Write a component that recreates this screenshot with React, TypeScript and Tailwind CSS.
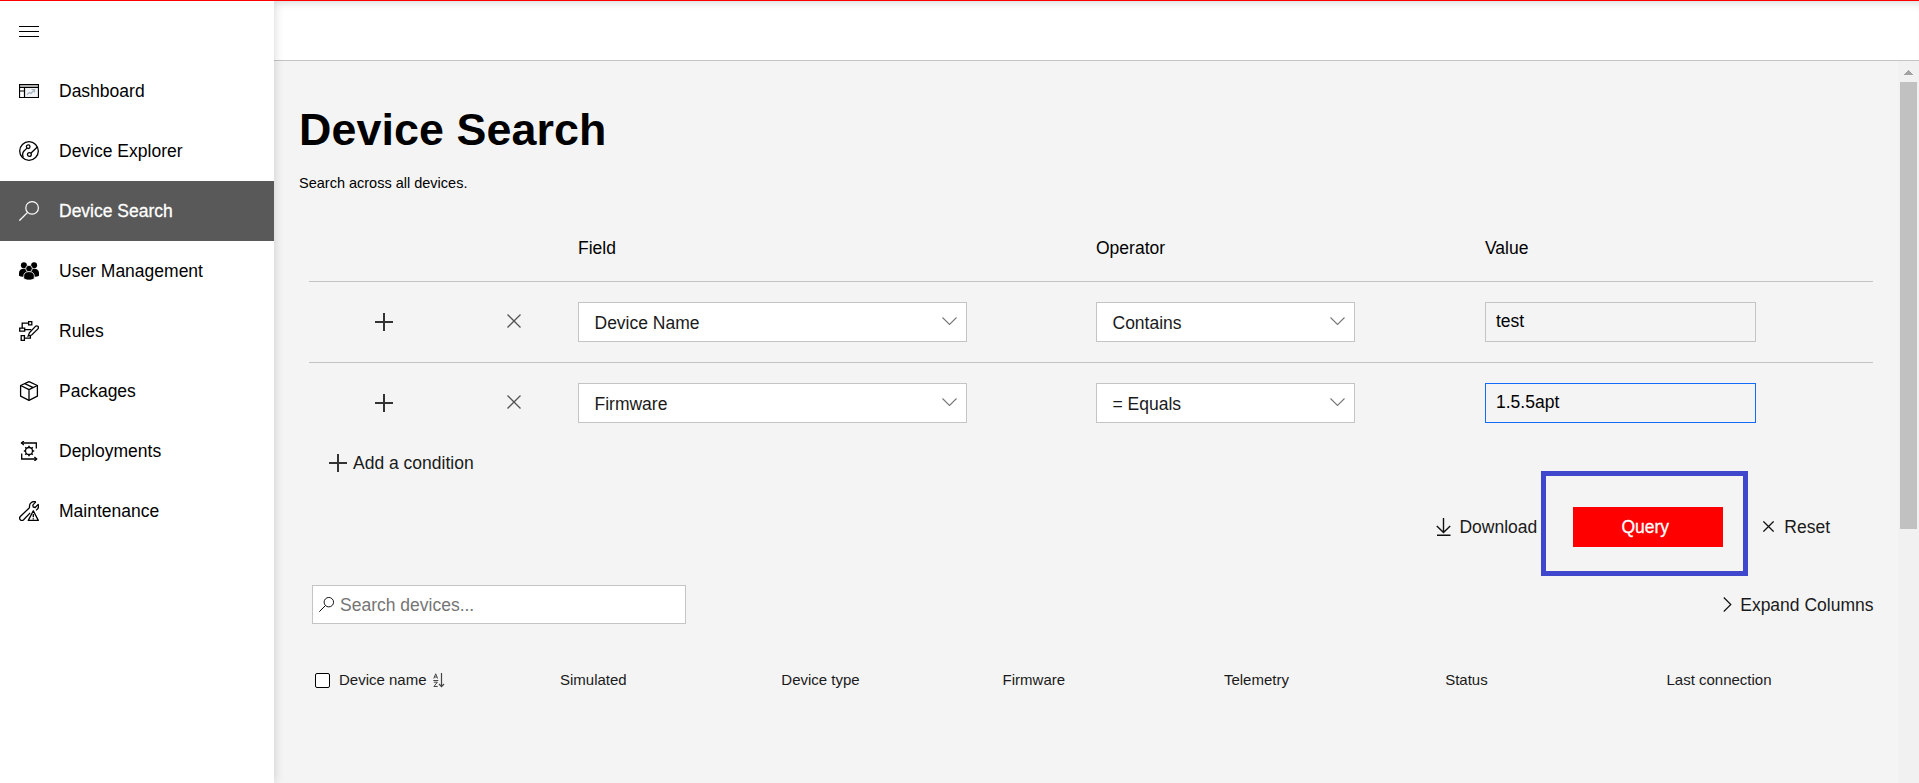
import React from "react";

type IconProps = { className?: string };

const MenuIcon = () => (
  <svg className="h-5 w-5" viewBox="0 0 20 20" shapeRendering="crispEdges">
    <path d="M0 5h20v1H0zM0 10h20v1H0zM0 15h20v1H0z" fill="#000" />
  </svg>
);

const DashboardIcon = () => (
  <svg className="h-5 w-5" viewBox="0 0 20 20" fill="none">
    <rect x="6" y="6" width="13" height="10" fill="#f1f3f6" />
    <rect x="1" y="4" width="18" height="2" fill="#b0b0b0" />
    <path d="M.5 3.5h19v13H.5zM.5 6.5h19M5.5 6.5v10M.5 10h5" stroke="#000" strokeWidth="1.2" />
    <path d="M8 13.5l2.5-2 1.5 1 3.5-4M12.500 8.500h3v3" stroke="#a9b4bf" strokeWidth="1.200" />
  </svg>
);

const ExplorerIcon = () => (
  <svg className="h-5 w-5" viewBox="0 0 20 20" fill="none" stroke="#000" strokeWidth="1.3">
    <circle cx="10" cy="10" r="9.3" />
    <circle cx="9.200" cy="5.700" r="1.800" />
    <circle cx="10.400" cy="13.500" r="1.900" />
    <path d="M8 7.100L5 10c-1.500 1.600-1.700 4-.7 6.600" />
    <path d="M11.800 12.300L18.300 6" />
  </svg>
);

const SearchIcon = ({ className }: IconProps) => (
  <svg className={className} viewBox="0 0 20 20" fill="none" stroke="currentColor">
    <circle cx="13.100" cy="6.900" r="6.300" strokeWidth="1.200" />
    <path d="M8.600 11.400L.400 19.600" strokeWidth="1.300" />
  </svg>
);

const UsersIcon = () => (
  <svg className="h-5 w-5" viewBox="0 0 20 20" fill="#000">
    <circle cx="4.900" cy="4.200" r="3" />
    <circle cx="15.100" cy="4.200" r="3" />
    <path d="M0 14.800V12c0-2.600 1.800-4.200 4.600-4.200h10.800c2.800 0 4.600 1.600 4.600 4.200v2.800c-1 .7-2.300 1-3.600 1H3.600c-1.300 0-2.600-.3-3.600-1z" />
    <circle cx="10" cy="7.600" r="3.300" stroke="#fff" strokeWidth=".8" />
    <path d="M4.700 17.400v-2.600c0-2.400 2-4.200 5.300-4.200s5.300 1.800 5.300 4.200v2.600c-1.300 1.200-3.200 1.700-5.300 1.700s-4-.5-5.300-1.700z" stroke="#fff" strokeWidth=".8" />
  </svg>
);

const RulesIcon = () => (
  <svg className="h-5 w-5" viewBox="0 0 20 20" fill="none" stroke="#000" strokeWidth="1.300">
    <path d="M9.600.700h3.200v3.200H9.600zM.700 7.200h5v3h-5zM2.200 14.700h3.200v4.600H2.200z" />
    <path d="M9.600 2.200H3.200v5M5.700 8.700h6.500M5.400 17.200h6v-2.400" />
    <path d="M10.400 11.800l5.800-6.200c1.900-1.700 4.200.3 2.700 2.300l-6.200 6.100-3.500 1z" />
  </svg>
);

const PackageIcon = () => (
  <svg className="h-5 w-5" viewBox="0 0 20 20" fill="none" stroke="#000" strokeWidth="1.300" strokeLinejoin="round">
    <path d="M10 .700l8.400 3.800v10.700L10 19.300l-8.400-4.100V4.500z" />
    <path d="M1.600 4.500L10 8.600l8.400-4.100M10 8.600v10.700M5.800 2.600l8.400 4" />
  </svg>
);

const DeployIcon = () => (
  <svg className="h-5 w-5" viewBox="0 0 20 20" fill="none" stroke="#000" strokeWidth="1.300">
    <path d="M2.500 2h14.800v5.500M2.700 12.500V18h14.500" />
    <path d="M4.800 0L2.500 2l2.300 2M15.400 16l2.300 2-2.300 2" />
    <circle cx="10" cy="10" r="3.500" />
    <path d="M10 6.500V4.800M10 13.500v1.700M6.500 10H4.800M13.500 10h1.700M7.500 7.500L6.300 6.300M12.500 12.500l1.200 1.200M12.500 7.500l1.200-1.200M7.500 12.500l-1.200 1.200" strokeWidth="1.600" />
  </svg>
);

const MaintenanceIcon = () => (
  <svg className="h-5 w-5" viewBox="0 0 20 20" fill="none" stroke="#000" strokeWidth="1.300" strokeLinejoin="round">
    <path d="M16.800.900c-3-1.100-6.600 1-6.300 4.700.1.700-.1 1.200-.6 1.700L1.300 15.500c-2.100 2.400 1 5.300 3.300 3.300l6.600-6.900" />
    <path d="M16.800.900l-3 3.200.5 1.900 1.900.5 3-3.100c.9 2.600-.3 4.700-2.200 5.800" />
    <path d="M14.300 9.800l5 9.600H9.300z" />
    <path d="M14.300 13v3.300M14.300 17.200v1.200" />
  </svg>
);

const PlusIcon = () => (
  <svg className="h-[18px] w-[18px] shrink-0" viewBox="0 0 18 18">
    <path d="M8 0h2v18H8zM0 8h18v2H0z" fill="#333" />
  </svg>
);

const CrossIcon = ({ className }: IconProps) => (
  <svg className={className} viewBox="0 0 14 14" fill="none" stroke="currentColor">
    <path d="M.5.5l13 13M13.500.500l-13 13" />
  </svg>
);

const ChevronDown = () => (
  <svg className="h-2 w-[15px]" viewBox="0 0 15 8" fill="none" stroke="#777" strokeWidth="1.100">
    <path d="M.5.500l7 7 7-7" />
  </svg>
);

const DownloadIcon = () => (
  <svg className="h-[18px] w-[15px]" viewBox="0 0 15 18" fill="none" stroke="#111" strokeWidth="1.400">
    <path d="M7.500 0v14M.8 8l6.700 6.500L14.200 8M1 17.200h13.500" />
  </svg>
);

const SortIcon = () => (
  <svg className="h-[15px] w-3" viewBox="0 0 12 15" fill="none" stroke="#444" strokeWidth="1">
    <path d="M.8 5.500L2.700.800l1.900 4.700M1.400 4h2.600M.3 7.500h5M.8 9.200h3.600L.9 13.500h3.800" />
    <path d="M8.500 0v13.500M6 11l2.500 2.700L11 11" strokeWidth="1.200" />
  </svg>
);

const navItems = [
  { label: "Dashboard", icon: <DashboardIcon /> },
  { label: "Device Explorer", icon: <ExplorerIcon /> },
  { label: "Device Search", icon: <SearchIcon className="h-5 w-5" />, active: true },
  { label: "User Management", icon: <UsersIcon /> },
  { label: "Rules", icon: <RulesIcon /> },
  { label: "Packages", icon: <PackageIcon /> },
  { label: "Deployments", icon: <DeployIcon /> },
  { label: "Maintenance", icon: <MaintenanceIcon /> },
];

const conditions = [
  { field: "Device Name", operator: "Contains", value: "test", focused: false },
  { field: "Firmware", operator: "= Equals", value: "1.5.5apt", focused: true },
];

const columns = ["Simulated", "Device type", "Firmware", "Telemetry", "Status", "Last connection"];

const Select = ({ label, className }: { label: string; className: string }) => (
  <button className={`flex h-10 items-center justify-between border border-[#c4c4c4] bg-white pr-[9.5px] pl-[15.5px] text-[#1a1a1a] ${className}`}>
    <span className="pt-px">{label}</span>
    <span className="pb-[2px]"><ChevronDown /></span>
  </button>
);

export default function App() {
  return (
    <div className="flex h-[783px] w-full flex-col overflow-hidden border-t border-[#ff0000] bg-[#f4f4f4] font-['Liberation_Sans',Arial,sans-serif] text-[17.5px] leading-[20px] text-black">
      <div className="flex min-h-0 flex-1">
        <nav className="z-10 flex w-[274px] shrink-0 flex-col bg-white shadow-[0_0_10px_rgba(0,0,0,0.17)]">
          <button className="flex h-[60px] items-center pl-[19px]"><MenuIcon /></button>
          {navItems.map((item) => (
            <a
              key={item.label}
              className={`flex h-[60px] items-center gap-[20px] pl-[19px] ${item.active ? "bg-[#595959] text-white [-webkit-text-stroke:0.3px_white]" : ""}`}
            >
              {item.icon}
              <span>{item.label}</span>
            </a>
          ))}
        </nav>

        <div className="flex min-w-0 flex-1 flex-col">
          <header className="h-[60px] shrink-0 border-b border-[#c4c4c4] bg-white shadow-[inset_0_8px_8px_-6px_rgba(0,0,0,0.15)]" />
          <div className="flex min-h-0 flex-1">
            <main className="min-w-0 flex-1 pl-[25px]">
              <h1 className="pt-[42px] text-[44.8px] leading-[52px] font-bold tracking-[0.08px]">Device Search</h1>
              <p className="mt-[18px] text-[14.5px] leading-[20px]">Search across all devices.</p>

              <section className="ml-[10px] w-[1564px]">
                <div className="flex h-[89px] items-end border-b border-[#c4c4c4] pb-[23px]">
                  <div className="w-[269px]" />
                  <div className="w-[518px]">Field</div>
                  <div className="w-[389px]">Operator</div>
                  <div>Value</div>
                </div>
                {conditions.map((c, i) => (
                  <div key={c.field} className={`flex h-[81px] items-center border-b ${i === 0 ? "border-[#c4c4c4]" : "border-transparent"}`}>
                    <div className="flex w-[269px] items-center pb-px pl-[66px]">
                      <PlusIcon />
                      <CrossIcon className="mb-px ml-[113.5px] h-[14px] w-[14px] stroke-[1.3] text-[#555]" />
                    </div>
                    <div className="w-[518px]"><Select label={c.field} className="w-[389px]" /></div>
                    <div className="w-[389px]"><Select label={c.operator} className="w-[259px]" /></div>
                    <input
                      defaultValue={c.value}
                      className={`h-10 w-[271px] border bg-transparent px-[10px] pb-[2px] outline-none ${c.focused ? "border-[#136bfb]" : "border-[#c4c4c4]"}`}
                    />
                  </div>
                ))}
                <button className="mt-[9px] ml-5 flex h-[20px] items-center gap-[6px] text-[#1a1a1a]">
                  <PlusIcon />
                  <span>Add a condition</span>
                </button>
              </section>

              <div className="-mt-[2px] flex h-[105px] w-[1531px] items-center justify-end text-[#1a1a1a]">
                <button className="mr-[4px] flex items-center gap-[8px] pt-[6px]">
                  <DownloadIcon />
                  <span>Download</span>
                </button>
                <div className="flex h-[105px] w-[207px] items-center justify-center border-[5px] border-[#3f48cc] pt-[7px] pl-[7px]">
                  <button className="h-10 w-[150px] bg-[#ff0000] pr-[6px] text-white [-webkit-text-stroke:0.3px_white]">Query</button>
                </div>
                <button className="ml-[15px] flex items-center gap-[10px] pt-[6px]">
                  <CrossIcon className="h-[11px] w-[11px] stroke-[1.6] text-[#111]" />
                  <span>Reset</span>
                </button>
              </div>

              <div className="mt-[9px] ml-[13px] flex w-[1561.5px] items-center justify-between">
                <div className="flex h-[39px] w-[374px] items-center gap-[6px] border border-[#c4c4c4] bg-white pl-[6px]">
                  <SearchIcon className="h-[15px] w-[15px] shrink-0" />
                  <input placeholder="Search devices..." className="w-full bg-transparent outline-none placeholder:text-[#757575]" />
                </div>
                <button className="flex items-center gap-[8px] text-[#1a1a1a]">
                  <svg className="h-[15px] w-[9px]" viewBox="0 0 9 15" fill="none" stroke="#111" strokeWidth="1.200">
                    <path d="M.8.500l7 7-7 7" />
                  </svg>
                  <span>Expand Columns</span>
                </button>
              </div>

              <div className="mt-[46px] ml-4 flex h-5 items-center text-[15px] text-[#1a1a1a]">
                <div className="flex w-[245px] items-center">
                  <span className="h-[15px] w-[15px] rounded-[2px] border border-black bg-white" />
                  <span className="ml-[9px]">Device name</span>
                  <span className="ml-[6px]"><SortIcon /></span>
                </div>
                {columns.map((c) => (
                  <div key={c} className="w-[221.3px]">{c}</div>
                ))}
              </div>
            </main>

            <div className="flex w-[21px] shrink-0 flex-col items-center bg-[#f1f1f1]">
              <svg className="h-[21px] w-[21px]" viewBox="0 0 21 21" shapeRendering="crispEdges">
                <path d="M6 14h9v-1h-1v-1h-1v-1h-1v-1h-1V9h-1v1H9v1H8v1H7v1H6z" fill="#a3a3a3" />
              </svg>
              <div className="h-[447px] w-[17px] bg-[#c1c1c1]" />
            </div>
          </div>
        </div>
      </div>
    </div>
  );
}
